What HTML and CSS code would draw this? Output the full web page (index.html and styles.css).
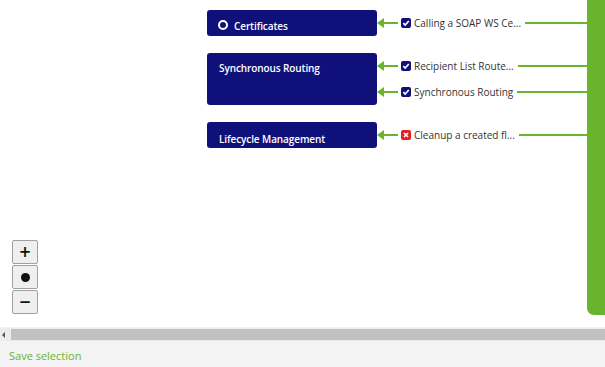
FILE: index.html
```html
<!DOCTYPE html>
<html>
<head>
<meta charset="utf-8">
<link rel="stylesheet" href="styles.css">
</head>
<body>
<div class="canvas">
  <div class="diagram">
    <div class="group">
      <div class="box h1"><span class="ring"></span><span class="title">Certificates</span></div>
      <div class="items">
        <div class="item"><span class="arrow"></span><span class="chk ok"><svg viewBox="0 0 10 10"><path d="M2.3 5.2 L4.2 7 L7.8 3" fill="none" stroke="#fff" stroke-width="1.7"/></svg></span><span class="label">Calling a SOAP WS Ce...</span><span class="line"></span></div>
      </div>
    </div>
    <div class="group">
      <div class="box h2"><span class="title pad">Synchronous Routing</span></div>
      <div class="items">
        <div class="item"><span class="arrow"></span><span class="chk ok"><svg viewBox="0 0 10 10"><path d="M2.3 5.2 L4.2 7 L7.8 3" fill="none" stroke="#fff" stroke-width="1.7"/></svg></span><span class="label">Recipient List Route...</span><span class="line"></span></div>
        <div class="item"><span class="arrow"></span><span class="chk ok"><svg viewBox="0 0 10 10"><path d="M2.3 5.2 L4.2 7 L7.8 3" fill="none" stroke="#fff" stroke-width="1.7"/></svg></span><span class="label">Synchronous Routing</span><span class="line"></span></div>
      </div>
    </div>
    <div class="group">
      <div class="box h1 low"><span class="title pad">Lifecycle Management</span></div>
      <div class="items">
        <div class="item"><span class="arrow"></span><span class="chk bad"><svg viewBox="0 0 10 10"><path d="M3 3 L7 7 M7 3 L3 7" fill="none" stroke="#fff" stroke-width="1.7"/></svg></span><span class="label">Cleanup a created fl...</span><span class="line"></span></div>
      </div>
    </div>
  </div>
  <div class="bar"></div>
  <div class="zoom">
    <button class="zbtn">+</button>
    <button class="zbtn"><span class="dot"></span></button>
    <button class="zbtn">&minus;</button>
  </div>
</div>
<div class="scroll"><span class="sarrow"></span><span class="thumb"></span></div>
<div class="footer">Save selection</div>
</body>
</html>
```
FILE: styles.css
```css
html, body { margin: 0; padding: 0; background: #fff; }
body { font-family: "Open Sans", "Noto Sans", sans-serif; width: 605px; height: 367px; overflow: hidden; }
.canvas { position: relative; height: 327px; display: flex; }
.diagram { flex: 1; padding: 10px 0 0 207px; display: flex; flex-direction: column; gap: 17px; }
.group { display: flex; }
.box { width: 170px; background: #10107a; border-radius: 3px; color: #fff; box-sizing: border-box; display: flex; align-items: flex-start; padding: 9px 0 0 11px; }
.h1 { height: 26px; }
.h2 { height: 52px; }
.low { padding-top: 10px; }
.title { font-size: 10px; font-weight: 600; line-height: 12px; letter-spacing: -0.1px; }
.title.pad { padding-left: 1px; }
.box.h1 .title { margin-top: 1px; }
.ring { width: 6px; height: 6px; border: 2px solid #fff; border-radius: 50%; margin: 1px 6px 0 0; }
.items { flex: 1; display: flex; flex-direction: column; }
.item { height: 26px; display: flex; align-items: center; }
.arrow { position: relative; width: 20px; height: 2px; background: #6ab42d; margin-left: 1px; margin-right: 3px; }
.arrow::before { content: ""; position: absolute; left: -1px; top: -4px; border-style: solid; border-width: 5px 7px 5px 0; border-color: transparent #6ab42d transparent transparent; }
.chk { width: 10px; height: 10px; border-radius: 2px; display: flex; }
.chk svg { width: 10px; height: 10px; }
.ok { background: #10107a; }
.bad { background: #e41f26; }
.label { font-size: 10px; color: #333; margin: 0 4px 0 3px; white-space: nowrap; letter-spacing: 0; }
.line { flex: 1; height: 2px; background: #6ab42d; }
.bar { width: 18px; height: 315px; background: #6ab42d; border-bottom-left-radius: 7px; }
.zoom { position: absolute; left: 12px; top: 240px; display: flex; flex-direction: column; gap: 1px; }
.zbtn { width: 26px; height: 24px; padding: 0; margin: 0; border: 1px solid #a0a0a0; border-radius: 2px; background: #efefef; font-family: "DejaVu Sans", sans-serif; font-weight: bold; font-size: 15px; line-height: 20px; color: #111; display: flex; align-items: center; justify-content: center; }
.dot { width: 9px; height: 9px; border-radius: 50%; background: #111; }
.scroll { height: 13px; background: #ececec; display: flex; align-items: center; border-top: 1px solid #f2f2f2; }
.sarrow { width: 0; height: 0; border-style: solid; border-width: 3px 3px 3px 0; border-color: transparent #555 transparent transparent; margin: 0 6px 0 2px; }
.thumb { flex: 1; height: 11px; background: #c1c1c1; }
.footer { height: 24px; background: #f3f3f3; color: #6ab42d; font-size: 11px; line-height: 26px; padding: 2px 0 0 9px; }
```
